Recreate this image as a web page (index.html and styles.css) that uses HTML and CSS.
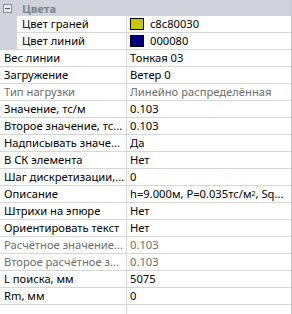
FILE: index.html
```html
<!DOCTYPE html>
<html lang="ru">
<head>
<meta charset="UTF-8">
<title>Свойства</title>
<link rel="stylesheet" href="styles.css">
</head>
<body>
<div class="grid">
    <div class="category">
        <span class="toggle"></span>
        <span class="category-name">Цвета</span>
    </div>

    <div class="row sub">
        <div class="name">Цвет граней</div>
        <div class="value"><span class="swatch yellow"></span>c8c80030</div>
    </div>
    <div class="row sub">
        <div class="name">Цвет линий</div>
        <div class="value"><span class="swatch navy"></span>000080</div>
    </div>

    <div class="row">
        <div class="name">Вес линии</div>
        <div class="value">Тонкая 03</div>
    </div>
    <div class="row">
        <div class="name">Загружение</div>
        <div class="value">Ветер 0</div>
    </div>
    <div class="row disabled">
        <div class="name">Тип нагрузки</div>
        <div class="value">Линейно распределённая</div>
    </div>
    <div class="row">
        <div class="name">Значение, тс/м</div>
        <div class="value">0.103</div>
    </div>
    <div class="row">
        <div class="name">Второе значение, тс...</div>
        <div class="value">0.103</div>
    </div>
    <div class="row">
        <div class="name">Надписывать значе...</div>
        <div class="value">Да</div>
    </div>
    <div class="row">
        <div class="name">В СК элемента</div>
        <div class="value">Нет</div>
    </div>
    <div class="row">
        <div class="name">Шаг дискретизации,...</div>
        <div class="value">0</div>
    </div>
    <div class="row">
        <div class="name">Описание</div>
        <div class="value">h=9.000м, P=0.035тс/м<sup>2</sup>, Sq...</div>
    </div>
    <div class="row">
        <div class="name">Штрихи на эпюре</div>
        <div class="value">Нет</div>
    </div>
    <div class="row">
        <div class="name">Ориентировать текст</div>
        <div class="value">Нет</div>
    </div>
    <div class="row disabled">
        <div class="name">Расчётное значение...</div>
        <div class="value">0.103</div>
    </div>
    <div class="row disabled">
        <div class="name">Второе расчётное з...</div>
        <div class="value">0.103</div>
    </div>
    <div class="row">
        <div class="name">L поиска, мм</div>
        <div class="value">5075</div>
    </div>
    <div class="row">
        <div class="name">Rm, мм</div>
        <div class="value">0</div>
    </div>

    <div class="row filler">
        <div class="name"></div>
        <div class="value"></div>
    </div>
</div>
</body>
</html>
```

FILE: styles.css
```css
body {
    margin: 0;
    padding: 0;
    background-color: #fff;
    font-family: "Noto Sans", Arial, sans-serif;
    font-size: 11.2px;
    color: #000;
}
.grid {
    width: 292px;
    height: 314px;
    box-sizing: border-box;
    border-right: 1px solid #c8c8c8;
    display: flex;
    flex-direction: column;
    overflow: hidden;
}
.category {
    height: 16px;
    background-color: #cfd3d9;
    display: flex;
    align-items: center;
}
.toggle {
    width: 9px;
    height: 9px;
    box-sizing: border-box;
    margin-left: 3px;
    border: 1px solid #8a8e94;
    background-color: #e8eaed;
    position: relative;
}
.toggle::after {
    content: "";
    position: absolute;
    left: 1px;
    top: 3px;
    width: 5px;
    height: 1px;
    background-color: #55595f;
}
.category-name {
    margin-left: 10px;
    font-weight: bold;
    color: #7d828a;
}
.row {
    display: flex;
    height: 17px;
    flex-shrink: 0;
}
.row .name,
.row .value {
    box-sizing: border-box;
    height: 17px;
    line-height: 16px;
    border-bottom: 1px solid #d6d6d6;
    white-space: nowrap;
    overflow: hidden;
}
.row .name {
    width: 127px;
    padding-left: 4px;
    border-right: 1px solid #d6d6d6;
}
.row .value {
    flex: 1;
    padding-left: 3px;
    display: flex;
    align-items: center;
}
.row.sub {
    background-color: #cfd3d9;
}
.row.sub .name {
    margin-left: 17px;
    width: 110px;
    padding-left: 5px;
    background-color: #fff;
}
.row.sub .value {
    background-color: #fff;
}
.row.disabled {
    color: #6d6d6d;
}
.row.filler {
    flex: 1;
}
.row.filler .name,
.row.filler .value {
    height: auto;
    border-bottom: none;
}
.swatch {
    display: inline-block;
    width: 14px;
    height: 12px;
    box-sizing: border-box;
    border: 1px solid #000;
    margin-right: 6px;
}
.swatch.yellow {
    background-color: #c8c800;
}
.swatch.navy {
    background-color: #000080;
}
sup {
    font-size: 7px;
    line-height: 0;
    vertical-align: 4px;
}
```
